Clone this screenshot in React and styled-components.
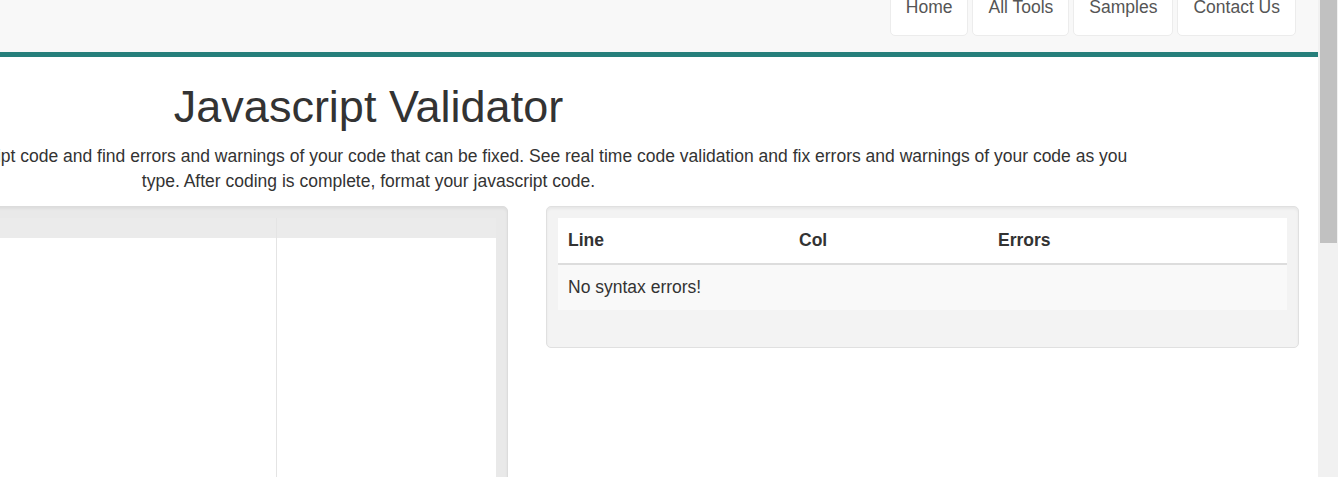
import React from "react";
import styled, { createGlobalStyle } from "styled-components";

const GlobalStyle = createGlobalStyle`
  html, body {
    margin: 0;
    padding: 0;
    overflow: hidden;
    background: #fff;
  }
  body {
    font-family: "Liberation Sans", Arial, sans-serif;
    font-size: 17.5px;
    line-height: 25px;
    color: #333;
  }
`;

const navItems = ["Home", "All Tools", "Samples", "Contact Us"];

function App() {
  return (
    <>
      <GlobalStyle />
      <Viewport>
        <Page>
          <NavBar>
            <NavList>
              {navItems.map((item) => (
                <NavItem key={item}>{item}</NavItem>
              ))}
            </NavList>
          </NavBar>

          <Intro>
            <h1>Javascript Validator</h1>
            <p>
              This free online tool helps you validate the javascript code and
              find errors and warnings of your code that can be fixed. See real
              time code validation and fix errors and warnings of your code as
              you
              <br />
              type. After coding is complete, format your javascript code.
            </p>
          </Intro>

          <PanelRow>
            <EditorWell>
              <Editor>
                <EditorBar />
                <EditorBody />
              </Editor>
            </EditorWell>

            <ResultWell>
              <ResultTable>
                <HeadRow>
                  <Cell>Line</Cell>
                  <Cell>Col</Cell>
                  <Cell>Errors</Cell>
                </HeadRow>
                <BodyRow>
                  <Cell $span>No syntax errors!</Cell>
                </BodyRow>
              </ResultTable>
            </ResultWell>
          </PanelRow>
        </Page>

        <ScrollTrack>
          <ScrollThumb />
        </ScrollTrack>
      </Viewport>
    </>
  );
}

const Viewport = styled.div`
  display: flex;
  height: 100vh;
  overflow: hidden;
`;

const Page = styled.div`
  flex: 0 0 1318px;
  width: 1318px;
  overflow: hidden;
`;

const NavBar = styled.nav`
  height: 52px;
  background: #f8f8f8;
  border-bottom: 5px solid #267f7b;
  display: flex;
  justify-content: flex-end;
  padding-right: 22px;
`;

const NavList = styled.ul`
  list-style: none;
  margin: 0;
  padding: 0;
  display: flex;
  align-items: flex-start;
  gap: 4px;
`;

const NavItem = styled.li`
  margin-top: -19px;
  padding: 13px 15px 15px;
  line-height: 25px;
  color: #555;
  background: #fff;
  border: 1px solid #ececec;
  border-radius: 5px;
  white-space: nowrap;
`;

const Intro = styled.div`
  width: 1600px;
  margin-left: -431.5px;
  text-align: center;

  h1 {
    margin: 25px 0 12.5px;
    font-size: 45px;
    line-height: 49.5px;
    font-weight: 500;
    color: #333;
  }

  p {
    margin: 0 0 12px;
    white-space: nowrap;
  }
`;

const PanelRow = styled.div`
  display: flex;
  gap: 38px;
  margin-left: -244px;
  align-items: flex-start;
`;

const Well = styled.div`
  flex: 0 0 752px;
  box-sizing: border-box;
  padding: 11px;
  border-radius: 5px;
`;

const EditorWell = styled(Well)`
  height: 400px;
  background: #e9e9e9;
  border: 1px solid #dcdcdc;
  box-shadow: inset 0 2px 3px rgba(0, 0, 0, 0.05);
`;

const Editor = styled.div`
  height: 100%;
  display: flex;
  flex-direction: column;
  background: #fff;
`;

const marginLine = "linear-gradient(#e4e4e4, #e4e4e4) no-repeat 508px 0 / 1px 100%";

const EditorBar = styled.div`
  height: 20px;
  background: ${marginLine}, #ebebeb;
`;

const EditorBody = styled.div`
  flex: 1;
  background: ${marginLine}, #fff;
`;

const ResultWell = styled(Well)`
  flex-basis: 753px;
  background: #f3f3f3;
  border: 1px solid #e0e0e0;
  box-shadow: inset 0 2px 3px rgba(0, 0, 0, 0.05);
  padding-bottom: 37px;
`;

const ResultTable = styled.div`
  display: grid;
  grid-template-columns: 231px 199px 1fr;
`;

const HeadRow = styled.div`
  display: contents;

  & > div {
    background: #fff;
    font-weight: 700;
    border-bottom: 2px solid #ddd;
  }
`;

const BodyRow = styled.div`
  display: contents;

  & > div {
    background: #f9f9f9;
  }
`;

const Cell = styled.div`
  padding: 10px;
  line-height: 25px;
  grid-column: ${(p) => (p.$span ? "1 / -1" : "auto")};
`;

const ScrollTrack = styled.div`
  flex: 0 0 20px;
  background: #f1f1f1;
  padding: 0 1px 0 2px;
  box-sizing: border-box;
`;

const ScrollThumb = styled.div`
  height: 243px;
  background: #c1c1c1;
`;

export default App;
